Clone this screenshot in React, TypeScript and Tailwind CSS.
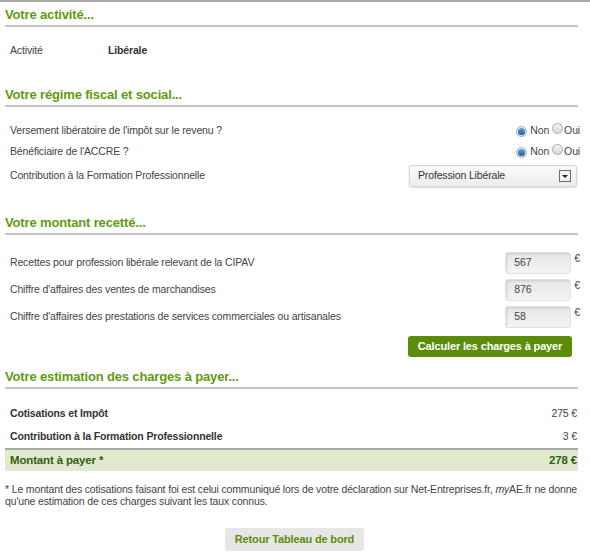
import type { ReactNode } from 'react'

const font = { fontFamily: '"Liberation Sans", Arial, sans-serif' }

function Heading({ children, className = '' }: { children: ReactNode; className?: string }) {
  return (
    <h2
      className={`mx-[5px] border-b-2 border-[#c4c4c4] pb-[2px] text-[13px] font-bold leading-[17px] text-[#5f9a10] ${className}`}
    >
      {children}
    </h2>
  )
}

function Radio({ checked }: { checked?: boolean }) {
  return (
    <span className="inline-flex h-[11px] w-[11px] items-center justify-center rounded-full border border-[#a8a8a8] bg-gradient-to-b from-[#f4f4f4] to-[#d8d8d8]">
      {checked && (
        <span className="h-[7px] w-[7px] rounded-full bg-gradient-to-b from-[#5fa3d8] to-[#1b5f9a]" />
      )}
    </span>
  )
}

function NonOui() {
  return (
    <div className="flex items-center text-[#444]">
      <Radio checked />
      <span className="ml-[3px]">Non</span>
      <span className="ml-[3px]">
        <Radio />
      </span>
      <span className="ml-[1px]">Oui</span>
    </div>
  )
}

function AmountInput({ value }: { value: string }) {
  return (
    <div className="flex items-start">
      <div className="flex h-[22px] w-[66px] items-center rounded-[3px] border border-[#e2e2e2] bg-gradient-to-b from-[#e6e6e6] to-[#f4f4f4] pl-[8px] text-[#444] shadow-[inset_1px_1px_2px_rgba(0,0,0,0.12)]">
        {value}
      </div>
      <span className="ml-[3px] leading-[12px] text-[#444]">€</span>
    </div>
  )
}

export default function App() {
  return (
    <div className="w-[590px] bg-white text-[10.5px] tracking-[-0.15px] text-[#444]" style={font}>
      <div className="border-t-2 border-[#a9a9a9] pb-[7px] pr-[7px]">
        <Heading className="mt-[4px]">Votre activité...</Heading>

        <div className="mt-[14px] flex h-[20px] items-center pl-[10px]">
          <span className="w-[98px]">Activité</span>
          <span className="font-bold text-[#333]">Libérale</span>
        </div>

        <Heading className="mt-[25px]">Votre régime fiscal et social...</Heading>

        <div className="mt-[14px] flex h-[20px] items-center justify-between pl-[10px] pr-[3px]">
          <span>Versement libératoire de l'impôt sur le revenu ?</span>
          <NonOui />
        </div>
        <div className="mt-[1px] flex h-[20px] items-center justify-between pl-[10px] pr-[3px]">
          <span>Bénéficiaire de l'ACCRE ?</span>
          <NonOui />
        </div>
        <div className="mt-[3px] flex h-[22px] items-center justify-between pl-[10px] pr-[6px]">
          <span>Contribution à la Formation Professionnelle</span>
          <div className="flex h-[22px] w-[168px] items-center justify-between rounded-[2px] border border-[#d6d6d6] bg-gradient-to-b from-[#fafafa] to-[#ececec] pl-[8px] pr-[5px] shadow-[0_1px_2px_rgba(0,0,0,0.15)]">
            <span className="text-[#333]">Profession Libérale</span>
            <span className="flex h-[12px] w-[12px] items-center justify-center border border-[#6b6b6b] bg-[#f2f2f2]">
              <span className="h-0 w-0 border-x-[3px] border-t-[3px] border-x-transparent border-t-[#222]" />
            </span>
          </div>
        </div>

        <Heading className="mt-[27px]">Votre montant recetté...</Heading>

        <div className="mt-[17px] flex h-[22px] items-center justify-between pl-[10px] pr-[3px]">
          <span>Recettes pour profession libérale relevant de la CIPAV</span>
          <AmountInput value="567" />
        </div>
        <div className="mt-[5px] flex h-[22px] items-center justify-between pl-[10px] pr-[3px]">
          <span>Chiffre d'affaires des ventes de marchandises</span>
          <AmountInput value="876" />
        </div>
        <div className="mt-[5px] flex h-[22px] items-center justify-between pl-[10px] pr-[3px]">
          <span>Chiffre d'affaires des prestations de services commerciales ou artisanales</span>
          <AmountInput value="58" />
        </div>

        <div className="mt-[8px] flex justify-end pr-[11px]">
          <button className="h-[21px] w-[164px] rounded-[3px] bg-[#5b8d0b] text-[11px] font-bold text-white">
            Calculer les charges à payer
          </button>
        </div>

        <Heading className="mt-[11px]">Votre estimation des charges à payer...</Heading>

        <div className="mx-[5px] mt-[14px]">
          <div className="flex h-[22px] items-center justify-between pl-[5px] pr-[1px]">
            <span className="font-bold text-[#333]">Cotisations et Impôt</span>
            <span>275 €</span>
          </div>
          <div className="mt-[1px] flex h-[22px] items-center justify-between pl-[5px] pr-[1px]">
            <span className="font-bold text-[#333]">Contribution à la Formation Professionnelle</span>
            <span>3 €</span>
          </div>
          <div className="flex h-[23px] items-center justify-between border-t-2 border-[#a8a8a8] bg-[#e0eacf] pl-[5px] pr-[1px] text-[11.5px] font-bold text-[#3b5a10]">
            <span>Montant à payer *</span>
            <span>278 €</span>
          </div>
        </div>

        <p className="mx-[5px] mt-[12px] leading-[12px] text-[#444]">
          * Le montant des cotisations faisant foi est celui communiqué lors de votre déclaration sur
          Net-Entreprises.fr, <i>my</i>AE.fr ne donne qu'une estimation de ces charges suivant les taux
          connus.
        </p>

        <div className="mt-[21px] flex justify-center">
          <button className="ml-[6px] h-[23px] w-[139px] rounded-[3px] bg-[#e6e6e6] text-[11px] font-bold text-[#5b8d0b]">
            Retour Tableau de bord
          </button>
        </div>
      </div>
    </div>
  )
}
